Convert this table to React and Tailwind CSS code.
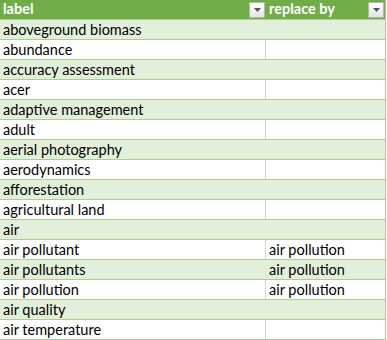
import React from 'react';

const rows = [
  ['aboveground biomass', ''],
  ['abundance', ''],
  ['accuracy assessment', ''],
  ['acer', ''],
  ['adaptive management', ''],
  ['adult', ''],
  ['aerial photography', ''],
  ['aerodynamics', ''],
  ['afforestation', ''],
  ['agricultural land', ''],
  ['air', ''],
  ['air pollutant', 'air pollution'],
  ['air pollutants', 'air pollution'],
  ['air pollution', 'air pollution'],
  ['air quality', ''],
  ['air temperature', ''],
];

function FilterButton() {
  return (
    <div className="w-[16px] h-[16px] bg-gradient-to-b from-white to-[#e4e4e4] border border-[#b4b4b4] flex items-center justify-center shrink-0">
      <svg width="7" height="4" viewBox="0 0 7 4">
        <path d="M0 0 L7 0 L3.5 4 Z" fill="#555" />
      </svg>
    </div>
  );
}

export default function App() {
  return (
    <div className="w-[387px] h-[340px] bg-white overflow-hidden text-[14.5px] leading-none" style={{ fontFamily: 'Lato, "Open Sans", sans-serif' }}>
      <div className="w-[386px] border-r border-[#a9d08e]">
        {/* header */}
        <div className="flex h-[20px] bg-[#70ad47] text-white font-bold border-b border-[#a9d08e]">
          <div className="w-[266px] flex items-center justify-between pl-[3px] pr-[1px]">
            <span>label</span>
            <FilterButton />
          </div>
          <div className="flex-1 flex items-center justify-between pl-[3px] pr-[1px]">
            <span>replace by</span>
            <FilterButton />
          </div>
        </div>
        {rows.map(([a, b], i) => (
          <div
            key={a}
            className={`flex h-[20px] border-b border-[#a9d08e] text-black ${i % 2 === 0 ? 'bg-[#e2efda]' : 'bg-white'}`}
          >
            <div className={`w-[266px] flex items-center pl-[3px] pt-[1px] ${i % 2 === 0 ? '' : 'border-r border-[#d4d4d4]'}`}>{a}</div>
            <div className="flex-1 flex items-center pl-[3px] pt-[1px]">{b}</div>
          </div>
        ))}
      </div>
    </div>
  );
}
